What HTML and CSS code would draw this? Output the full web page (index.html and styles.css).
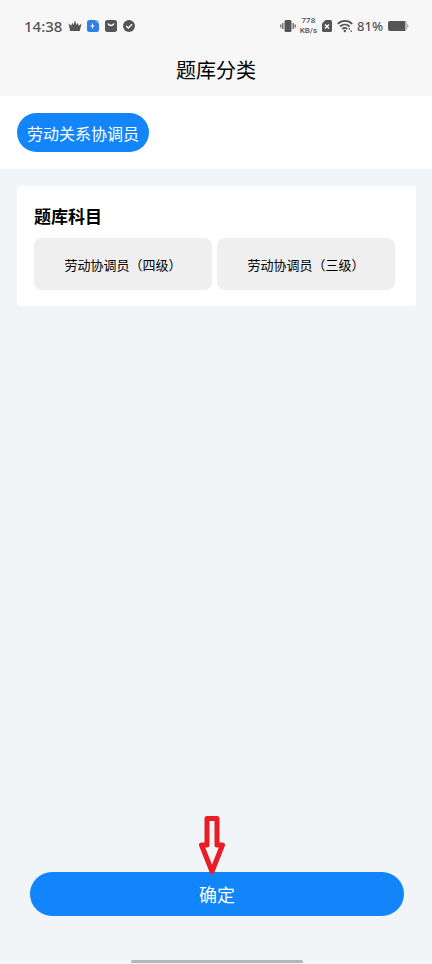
FILE: index.html
```html
<!DOCTYPE html>
<html lang="zh-CN">
<head>
<meta charset="utf-8">
<meta name="viewport" content="width=device-width, initial-scale=1">
<title>题库分类</title>
<link rel="stylesheet" href="styles.css">
</head>
<body>
<div class="screen">
  <header class="top">
    <div class="status">
      <div class="status-group">
        <span class="clock">14:38</span>
        <svg class="icon" width="14" height="14" viewBox="0 0 14 14" aria-hidden="true"><path d="M.5 4.500 3.200 6.800 4.300 3.800 5.600 6 7 1.200 8.400 6 9.700 3.800l1.100 3 2.700-2.300L11.800 12H2.200z"/></svg>
        <svg class="icon" width="14" height="14" viewBox="0 0 14 14" aria-hidden="true"><path class="blue" d="M3.500 1H9l4 3.500V10.500A2.500 2.500 0 0 1 10.500 13h-7A2.500 2.500 0 0 1 1 10.500v-7A2.500 2.500 0 0 1 3.500 1z"/><path class="pale" d="M9 1h1.500A2.500 2.500 0 0 1 13 3.500v1.500z"/><path class="mark thin" d="M6.500 4.500v5M4.500 7h4"/></svg>
        <svg class="icon" width="14" height="14" viewBox="0 0 14 14" aria-hidden="true"><rect x="1" y="1" width="12" height="12" rx="2.500"/><path class="mark" d="M4 4.500c.8 2.600 5.200 2.600 6 0"/></svg>
        <svg class="icon" width="14" height="14" viewBox="0 0 14 14" aria-hidden="true"><circle cx="7" cy="7" r="6"/><path class="mark" d="m4.200 7 2.100 2.100 3.700-3.900"/></svg>
      </div>
      <div class="status-group">
        <svg class="icon" width="16" height="14" viewBox="0 0 16 14" aria-hidden="true"><rect x="4.500" y="1" width="7" height="12" rx="1.500"/><path class="line" d="M2.800 4v6M.8 5.500v3M13.200 4v6M15.200 5.500v3"/></svg>
        <span class="speed"><span>778</span><span>KB/s</span></span>
        <svg class="icon" width="12" height="14" viewBox="0 0 12 14" aria-hidden="true"><path d="M4.500 1H9.500A1.500 1.500 0 0 1 11 2.500v9A1.500 1.500 0 0 1 9.500 13h-7A1.500 1.500 0 0 1 1 11.500V4.500z"/><path class="mark" d="m4 5.500 4 4m0-4-4 4"/></svg>
        <svg class="icon" width="16" height="14" viewBox="0 0 16 14" aria-hidden="true"><path class="wave" d="M.8 4.800c4-3.900 10.400-3.900 14.400 0M3.100 7.500c2.800-2.600 6.800-2.600 9.600 0M5.400 10c1.400-1.300 3.400-1.300 4.800 0"/><circle cx="7.800" cy="12" r="1.200"/><path class="line" d="M12.400 9v1.700M14.200 11.300V13"/></svg>
        <span class="percent">81%</span>
        <svg class="icon" width="22" height="12" viewBox="0 0 22 12" aria-hidden="true"><path class="cap" d="M16 1h2a2 2 0 0 1 2 2v.8q1.500.5 1.500 2.200T20 8.200V9a2 2 0 0 1-2 2h-2z"/><path d="M3 1h15v10H3a2 2 0 0 1-2-2V3a2 2 0 0 1 2-2z"/></svg>
      </div>
    </div>
    <h1 class="title">题库分类</h1>
  </header>
  <nav class="categories">
    <button class="category" type="button">劳动关系协调员</button>
  </nav>
  <main class="content">
    <section class="card">
      <h2 class="card-title">题库科目</h2>
      <div class="subjects">
        <button class="subject" type="button">劳动协调员（四级）</button>
        <button class="subject" type="button">劳动协调员（三级）</button>
      </div>
    </section>
  </main>
  <footer class="bottom">
    <div class="action">
      <svg class="pointer" width="26" height="60" viewBox="0 0 26 60" aria-hidden="true"><path d="M8 3.500h10V30h5.500L13 56.500 2.500 30H8z"/></svg>
      <button class="confirm" type="button">确定</button>
    </div>
    <div class="home-bar"></div>
  </footer>
</div>
</body>
</html>
```

FILE: styles.css
```css
* {
  box-sizing: border-box;
}

body {
  margin: 0;
  background: #f1f5f8;
  color: #000;
  font-family: "Noto Sans CJK SC", sans-serif;
}

button {
  border: 0;
  padding: 0;
  font-family: inherit;
  color: inherit;
  cursor: pointer;
}

.screen {
  display: flex;
  flex-direction: column;
  min-height: 100vh;
}

.top {
  background: #f7f7f7;
}

.status {
  display: flex;
  justify-content: space-between;
  align-items: center;
  height: 52px;
  padding: 0 23px 0 24px;
  color: #555;
  font-family: "Noto Sans", sans-serif;
}

.status-group {
  display: flex;
  align-items: center;
  gap: 4px;
}

.clock {
  margin-right: 2px;
  font-size: 15px;
  font-weight: 500;
}

.percent {
  font-size: 13px;
  font-weight: 500;
}

.speed {
  display: flex;
  flex-direction: column;
  align-items: center;
  font-family: Roboto, sans-serif;
  font-size: 8px;
  font-weight: 500;
  line-height: 10px;
}

.icon {
  fill: #555;
}

.icon .blue {
  fill: #2f7fe8;
}

.icon .pale {
  fill: #8dbcf5;
}

.icon .cap {
  fill: #bbb;
}

.icon .mark {
  fill: none;
  stroke: #fff;
  stroke-width: 1.4;
}

.icon .thin {
  stroke-width: 1;
}

.icon .line {
  fill: none;
  stroke: #555;
  stroke-width: 1.2;
}

.icon .wave {
  fill: none;
  stroke: #555;
  stroke-width: 1.8;
}

.title {
  margin: 0;
  height: 44px;
  font-size: 20px;
  font-weight: 400;
  line-height: 36px;
  text-align: center;
}

.categories {
  display: flex;
  padding: 17px;
  background: #fff;
}

.category {
  height: 39px;
  padding: 0 10px;
  border-radius: 20px;
  background: #1385fb;
  color: #fff;
  font-size: 16px;
}

.content {
  flex: 1;
  padding: 17px 16px 17px 17px;
}

.card {
  padding: 17px 17px 16px;
  border-radius: 4px;
  background: #fff;
}

.card-title {
  margin: 0 0 10px;
  font-size: 17px;
  font-weight: 700;
  line-height: 25px;
}

.subjects {
  display: grid;
  grid-template-columns: 1fr 1fr;
  gap: 5px;
  padding-right: 4px;
}

.subject {
  height: 52px;
  border-radius: 8px;
  background: #efefef;
  font-size: 13px;
}

.bottom {
  padding: 0 28px 1px 30px;
}

.action {
  position: relative;
}

.confirm {
  display: block;
  width: 100%;
  height: 44px;
  border-radius: 22px;
  background: #1385fb;
  color: #fff;
  font-size: 18px;
}

.pointer {
  position: absolute;
  bottom: 41px;
  left: calc(50% - 18px);
  fill: none;
  stroke: #ea1c24;
  stroke-width: 5;
  stroke-linejoin: round;
}

.home-bar {
  width: 172px;
  height: 3px;
  margin: 44px auto 0;
  border-radius: 2px;
  background: #b3b7bb;
}
```
